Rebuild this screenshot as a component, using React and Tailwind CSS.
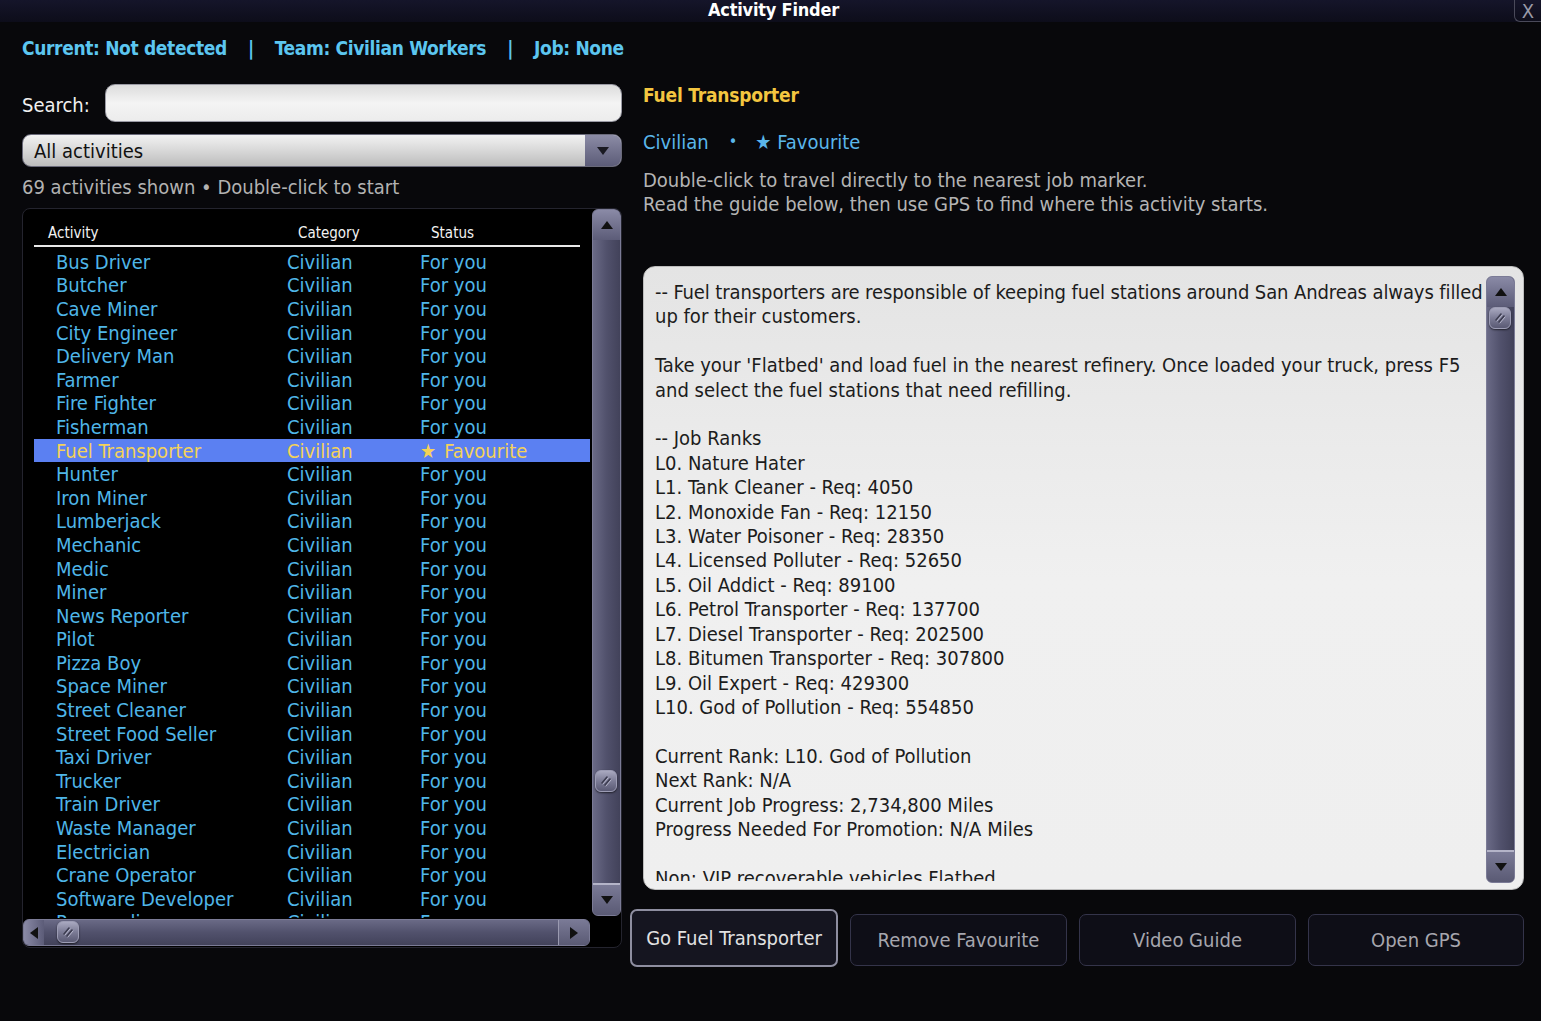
import React from "react";

const ACTIVITIES = [
  "Bus Driver",
  "Butcher",
  "Cave Miner",
  "City Engineer",
  "Delivery Man",
  "Farmer",
  "Fire Fighter",
  "Fisherman",
  "Fuel Transporter",
  "Hunter",
  "Iron Miner",
  "Lumberjack",
  "Mechanic",
  "Medic",
  "Miner",
  "News Reporter",
  "Pilot",
  "Pizza Boy",
  "Space Miner",
  "Street Cleaner",
  "Street Food Seller",
  "Taxi Driver",
  "Trucker",
  "Train Driver",
  "Waste Manager",
  "Electrician",
  "Crane Operator",
  "Software Developer",
  "Paramedic",
];

const GUIDE = [
  "-- Fuel transporters are responsible of keeping fuel stations around San Andreas always filled",
  "up for their customers.",
  "",
  "Take your 'Flatbed' and load fuel in the nearest refinery. Once loaded your truck, press F5",
  "and select the fuel stations that need refilling.",
  "",
  "-- Job Ranks",
  "L0. Nature Hater",
  "L1. Tank Cleaner - Req: 4050",
  "L2. Monoxide Fan - Req: 12150",
  "L3. Water Poisoner - Req: 28350",
  "L4. Licensed Polluter - Req: 52650",
  "L5. Oil Addict - Req: 89100",
  "L6. Petrol Transporter - Req: 137700",
  "L7. Diesel Transporter - Req: 202500",
  "L8. Bitumen Transporter - Req: 307800",
  "L9. Oil Expert - Req: 429300",
  "L10. God of Pollution - Req: 554850",
  "",
  "Current Rank: L10. God of Pollution",
  "Next Rank: N/A",
  "Current Job Progress: 2,734,800 Miles",
  "Progress Needed For Promotion: N/A Miles",
  "",
  "Non: VIP recoverable vehicles Flatbed",
];

function Tri({ dir = "up", className = "" }) {
  const pts = {
    up: "0,8 6,0 12,8",
    down: "0,0 12,0 6,8",
    left: "8,0 8,12 0,6",
    right: "0,0 0,12 8,6",
  }[dir];
  const vb = dir === "up" || dir === "down" ? "0 0 12 8" : "0 0 8 12";
  const size = dir === "up" || dir === "down" ? "w-[12px] h-[8px]" : "w-[8px] h-[12px]";
  return (
    <svg viewBox={vb} className={`${size} ${className}`}>
      <polygon points={pts} fill="currentColor" />
    </svg>
  );
}

function Grip() {
  return (
    <div className="w-[22px] h-[22px] rounded-[6px] bg-gradient-to-b from-[#a9a9c0] via-[#7c7c96] to-[#5a5a74] border border-[#9c9cb4] flex items-center justify-center shadow-[0_1px_2px_rgba(0,0,0,0.6)]">
      <svg viewBox="0 0 14 14" className="w-[14px] h-[14px]">
        <path d="M3 9 L8 3 M6 11 L11 5" stroke="#3c3c50" strokeWidth="1.6" strokeLinecap="round" />
        <path d="M4 10 L9 4 M7 12 L12 6" stroke="#c8c8da" strokeWidth="0.8" strokeLinecap="round" />
      </svg>
    </div>
  );
}

function VScroll({ thumbTop, className = "" }) {
  return (
    <div
      className={`relative rounded-[6px] bg-gradient-to-r from-[#6a6a86] via-[#51516c] to-[#42425a] border border-[#7b7b96] flex flex-col ${className}`}
    >
      <div className="h-[30px] rounded-t-[5px] bg-gradient-to-b from-[#8a8aa6] to-[#5c5c78] flex items-center justify-center text-[#111]">
        <Tri dir="up" />
      </div>
      <div className="flex-1" />
      <div className="h-[32px] rounded-b-[5px] border-t-2 border-[#b4b4c8] bg-gradient-to-b from-[#7a7a96] to-[#5a5a74] flex items-center justify-center text-[#111]">
        <Tri dir="down" />
      </div>
      <div className="absolute left-[2px]" style={{ top: thumbTop }}>
        <Grip />
      </div>
    </div>
  );
}

function Row({ name, selected }) {
  return (
    <div
      className={`h-[23.6px] flex items-center whitespace-nowrap text-[20px] leading-none ${
        selected ? "bg-[#5b80f2] text-[#f4d258]" : "text-[#4fb6e8]"
      }`}
    >
      <span className="w-[253px] pl-[22px]">{name}</span>
      <span className="w-[133px]">Civilian</span>
      <span className="flex items-center">
        {selected ? (
          <>
            <span className="text-[#f4d258] mr-[8px]">★</span>Favourite
          </>
        ) : (
          "For you"
        )}
      </span>
    </div>
  );
}

export default function App() {
  return (
    <div className="w-[1541px] h-[1021px] overflow-hidden bg-[#08080b] font-['DejaVu_Sans_Condensed','DejaVu_Sans',sans-serif] font-stretch-condensed text-white">
      {/* title bar */}
      <div className="relative h-[22px] bg-gradient-to-b from-[#15152a] to-[#0d0d1a] flex items-center justify-center">
        <span className="font-bold text-[18px] leading-none mt-[-2px] pl-[6px] tracking-[-0.2px]">Activity Finder</span>
        <div className="absolute right-0 top-0 w-[27px] h-[22px] border-l border-b border-[#4a4a5a] rounded-bl-[6px] flex items-center justify-center text-[#9a9aa8] text-[20px] leading-none">
          X
        </div>
      </div>

      <div className="flex pl-[22px]">
        {/* left column */}
        <div className="w-[600px] flex flex-col">
          <div className="mt-[14px] h-[24px] flex items-center whitespace-nowrap font-bold text-[19px] tracking-[-0.35px] text-[#5cc6f0] gap-[21px]">
            <span>Current: Not detected</span>
            <span>|</span>
            <span>Team: Civilian Workers</span>
            <span>|</span>
            <span>Job: None</span>
          </div>

          <div className="mt-[24px] flex items-center h-[38px]">
            <span className="w-[83px] text-[20px] text-[#f0f0f0] pt-[3px]">Search:</span>
            <div className="flex-1 h-[38px] rounded-[10px] border border-[#9a9aa4] bg-gradient-to-b from-[#dcdcdc] via-[#f4f4f4] to-[#ececec]" />
          </div>

          <div className="mt-[12px] h-[33px] rounded-[9px] border border-[#6a6a7a] bg-gradient-to-b from-[#f2f2f2] via-[#d8d8d8] to-[#bdbdbd] flex overflow-hidden">
            <span className="flex-1 pl-[11px] flex items-center text-[20px] text-[#111]">All activities</span>
            <div className="w-[36px] bg-gradient-to-b from-[#8c8ca6] to-[#5c5c78] flex items-center justify-center text-[#1a1a22]">
              <Tri dir="down" />
            </div>
          </div>

          <div className="mt-[8px] h-[24px] flex items-center text-[20px] text-[#b2b2b2] whitespace-nowrap">
            69 activities shown • Double-click to start
          </div>

          {/* list */}
          <div className="mt-[9px] h-[740px] rounded-[8px] border border-[#24242e] bg-black flex flex-col overflow-hidden">
            <div className="h-[709px] flex">
              <div className="flex-1 overflow-hidden pl-[11px] pt-[12px]">
                <div className="w-[546px] h-[26px] border-b-2 border-[#e8e8e8] flex items-center text-[15px] text-[#f2f2f2] whitespace-nowrap">
                  <span className="w-[264px] pl-[14px]">Activity</span>
                  <span className="w-[133px]">Category</span>
                  <span>Status</span>
                </div>
                <div className="mt-[3px] w-[556px]">
                  {ACTIVITIES.map((a) => (
                    <Row key={a} name={a} selected={a === "Fuel Transporter"} />
                  ))}
                </div>
              </div>
              <VScroll thumbTop={560} className="w-[29px] h-[707px]" />
            </div>
            <div className="h-[29px] flex items-start pt-[1px]">
              <div className="relative w-[567px] h-[27px] rounded-[6px] border border-[#7b7b96] bg-gradient-to-b from-[#6a6a86] via-[#51516c] to-[#42425a] flex">
                <div className="w-[20px] rounded-l-[5px] bg-gradient-to-r from-[#8a8aa6] to-[#5c5c78] flex items-center justify-center text-[#111]">
                  <Tri dir="left" />
                </div>
                <div className="flex-1" />
                <div className="w-[31px] rounded-r-[5px] border-l border-[#9a9ab0] bg-gradient-to-b from-[#7a7a96] to-[#5a5a74] flex items-center justify-center text-[#111]">
                  <Tri dir="right" />
                </div>
                <div className="absolute left-[33px] top-[1px]">
                  <Grip />
                </div>
              </div>
            </div>
          </div>
        </div>

        {/* right column */}
        <div className="ml-[8px] w-[895px] flex flex-col">
          <div className="pl-[13px]">
            <div className="mt-[61px] h-[24px] flex items-center font-bold text-[19px] tracking-[-0.2px] text-[#f4c640]">
              Fuel Transporter
            </div>
            <div className="mt-[23px] h-[24px] flex items-center text-[20px] text-[#5ab6ea] whitespace-nowrap">
              Civilian
              <span className="ml-[20px] mr-[18px] text-[16px]">•</span>
              <span className="mr-[6px]">★</span>Favourite
            </div>
            <div className="mt-[14px] text-[20px] leading-[24px] text-[#b4b4b4] whitespace-nowrap">
              <div>Double-click to travel directly to the nearest job marker.</div>
              <div>Read the guide below, then use GPS to find where this activity starts.</div>
            </div>

            {/* memo */}
            <div className="mt-[50px] w-[881px] h-[624px] rounded-[12px] border border-[#bdbdbd] bg-gradient-to-b from-[#e4e4e4] via-[#f0f0f0] to-[#efefef] flex">
              <div className="flex-1 h-[614px] overflow-hidden pl-[11px] pt-[13px] text-[20px] leading-[24.42px] text-[#1c1c1c] whitespace-nowrap">
                {GUIDE.map((l, i) => (
                  <div key={i} className={`h-[24.42px] ${i === 0 ? "tracking-[-0.1px]" : ""}`}>
                    {l}
                  </div>
                ))}
              </div>
              <VScroll thumbTop={30} className="w-[29px] h-[607px] mt-[9px] mr-[8px]" />
            </div>
          </div>

          <div className="mt-[19px] flex gap-[12px] text-[20px]">
            <div className="w-[208px] h-[58px] rounded-[7px] border-2 border-[#8e8ea0] bg-[#151520] flex items-center justify-center text-[#e2e2e2]">
              Go Fuel Transporter
            </div>
            <div className="mt-[5px] w-[217px] h-[52px] rounded-[7px] border border-[#34344a] bg-[#0e0e17] flex items-center justify-center text-[#a6a6ae]">
              Remove Favourite
            </div>
            <div className="mt-[5px] w-[217px] h-[52px] rounded-[7px] border border-[#34344a] bg-[#0e0e17] flex items-center justify-center text-[#a6a6ae]">
              Video Guide
            </div>
            <div className="mt-[5px] w-[216px] h-[52px] rounded-[7px] border border-[#34344a] bg-[#0e0e17] flex items-center justify-center text-[#a6a6ae]">
              Open GPS
            </div>
          </div>
        </div>
      </div>
    </div>
  );
}
